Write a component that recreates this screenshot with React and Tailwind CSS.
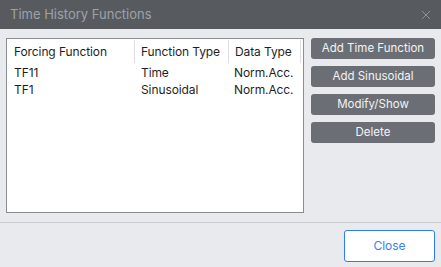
import React from 'react';

const rows = [
  { name: 'TF11', type: 'Time', data: 'Norm.Acc.' },
  { name: 'TF1', type: 'Sinusoidal', data: 'Norm.Acc.' },
];

const actions = ['Add Time Function', 'Add Sinusoidal', 'Modify/Show', 'Delete'];

export default function App() {
  return (
    <div
      className="w-[441px] h-[267px] flex flex-col bg-[#e9eaee] overflow-hidden"
      style={{ fontFamily: 'Inter, "Noto Sans", sans-serif' }}
    >
      {/* Title bar */}
      <div className="h-[29px] shrink-0 bg-[#575b60] flex items-center justify-between pl-[10px] pr-[10px]">
        <span className="text-[13px] text-[#9ea2a7]">Time History Functions</span>
        <svg width="10" height="10" viewBox="0 0 10 10">
          <path d="M1 1 L9 9 M9 1 L1 9" stroke="#8f9398" strokeWidth="1" />
        </svg>
      </div>

      {/* Body */}
      <div className="flex-1 flex gap-[7px] pt-[9px] pl-[6px] pr-[6px]">
        <div className="w-[298px] h-[175px] bg-white border border-[#8a8d92] text-[12px] text-[#1f1f1f] tracking-[-0.1px]">
          <div className="flex h-[25px] items-center">
            <div className="w-[128px] h-[23px] pl-[7px] flex items-center border-r border-[#dcdde0]">Forcing Function</div>
            <div className="w-[94px] h-[23px] pl-[6px] flex items-center border-r border-[#dcdde0]">Function Type</div>
            <div className="w-[72px] h-[23px] pl-[6px] flex items-center border-r border-[#dcdde0]">Data Type</div>
          </div>
          {rows.map((r) => (
            <div key={r.name} className="flex h-[17px] items-center">
              <div className="w-[128px] pl-[7px]">{r.name}</div>
              <div className="w-[94px] pl-[6px]">{r.type}</div>
              <div className="w-[72px] pl-[5px]">{r.data}</div>
            </div>
          ))}
        </div>

        <div className="w-[124px] flex flex-col gap-[7px]">
          {actions.map((a) => (
            <button
              key={a}
              className="h-[21px] w-full rounded-[3px] bg-[#6b6f75] text-[11.5px] text-[#f2f3f5] flex items-center justify-center"
            >
              {a}
            </button>
          ))}
        </div>
      </div>

      {/* Footer */}
      <div className="h-[45px] shrink-0 border-t border-[#c9cacd] flex justify-end items-start pt-[7px] pr-[6px]">
        <button className="w-[91px] h-[32px] rounded-[3px] border border-[#2f7cf6] bg-white text-[12px] text-[#3b7ef0]">
          Close
        </button>
      </div>
    </div>
  );
}
